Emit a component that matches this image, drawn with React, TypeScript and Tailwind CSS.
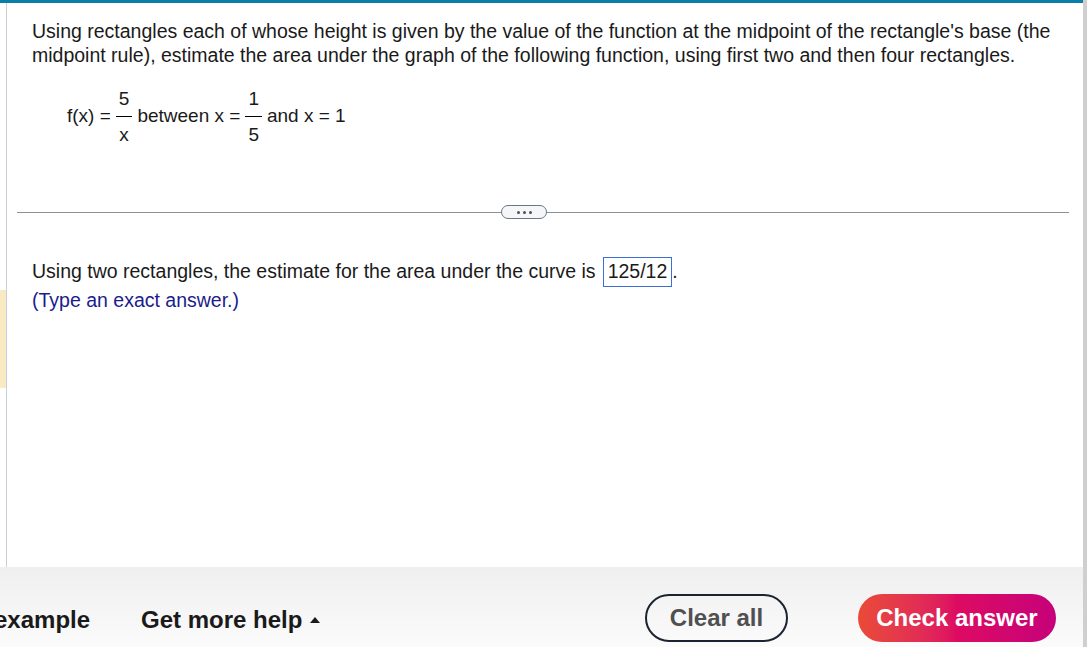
import React from "react";

const font = { fontFamily: '"Liberation Sans", Arial, sans-serif' };

function Frac({ top, bottom }: { top: string; bottom: string }) {
  return (
    <span className="inline-flex flex-col items-center mx-[5px] gap-[6px] leading-[23px]">
      <span className="px-[3px]">{top}</span>
      <span className="w-full h-px bg-black" />
      <span className="px-[3px]">{bottom}</span>
    </span>
  );
}

export default function App() {
  return (
    <div className="w-[1087px] h-[647px] bg-white relative overflow-hidden flex text-black" style={font}>
      <div className="w-[1083px] flex flex-col">
        <div className="h-[3px] bg-[#0a7ea4]" />
        <div className="flex flex-1">
          {/* left rail */}
          <div className="w-[6px] flex flex-col">
            <div className="h-[287px]" />
            <div className="h-[98px] bg-[#f8ebc3]" />
          </div>
          <div className="w-px bg-[#c9ced8]" />
          <div className="flex-1 flex flex-col">
            <div className="pl-[25px] pr-[20px] pt-[16px]">
              <p className="text-[19.5px] leading-[24px] text-[#1a1a1a]">
                Using rectangles each of whose height is given by the value of the function at the midpoint of the rectangle's base (the
                midpoint rule), estimate the area under the graph of the following function, using first two and then four rectangles.
              </p>
              <div className="mt-[20px] ml-[35px] flex items-center text-[19px] text-[#1a1a1a]">
                <span>f(x) =</span>
                <Frac top="5" bottom="x" />
                <span>between x =</span>
                <Frac top="1" bottom="5" />
                <span>and x = 1</span>
              </div>
            </div>
            {/* separator */}
            <div className="mt-[59px] ml-[10px] mr-[14px] flex items-center">
              <div className="flex-1 h-px bg-[#8b9099]" />
              <div className="w-[46px] h-[14px] rounded-full border border-[#6b7785] bg-[#f4f6f8] flex items-center justify-center gap-[3px]">
                <span className="w-[3px] h-[3px] rounded-full bg-[#4a5260]" />
                <span className="w-[3px] h-[3px] rounded-full bg-[#4a5260]" />
                <span className="w-[3px] h-[3px] rounded-full bg-[#4a5260]" />
              </div>
              <div className="w-[522px] h-px bg-[#8b9099]" />
            </div>
            <div className="pl-[25px] mt-[38px] text-[19.5px] text-[#1a1a1a]">
              <div className="flex items-center h-[30px]">
                <span>Using two rectangles, the estimate for the area under the curve is</span>
                <span className="ml-[7px] h-[30px] px-[4px] border border-[#3b6fd6] flex items-center">125/12</span>
                <span>.</span>
              </div>
              <div className="leading-[24px] text-[#1c1c8c] mt-[1px]">(Type an exact answer.)</div>
            </div>
          </div>
        </div>
        {/* footer */}
        <div className="h-[80px] pt-[27px] bg-gradient-to-b from-[#efefef] to-[#fbfbfb] flex items-start text-[24px] font-bold text-[#1a1a1a]">
          <span className="-ml-[6px] h-[48px] pt-[3px] flex items-center">example</span>
          <span className="ml-[51px] h-[48px] pt-[3px] flex items-center">
            Get more help
            <svg width="10" height="6" viewBox="0 0 10 6" className="ml-[8px]">
              <path d="M0 6 L5 0 L10 6 Z" fill="#1a1a1a" />
            </svg>
          </span>
          <div className="flex-1" />
          <button className="w-[143px] h-[48px] rounded-full border-[2px] border-[#1c2330] text-[#505050] bg-transparent">
            Clear all
          </button>
          <button className="ml-[70px] mr-[27px] w-[198px] h-[48px] rounded-full text-white bg-gradient-to-r from-[#ea4a36] via-[#dd0a62] to-[#c6007a]">
            Check answer
          </button>
        </div>
      </div>
      <div className="w-[4px] bg-[#cfcfcf]" />
    </div>
  );
}
